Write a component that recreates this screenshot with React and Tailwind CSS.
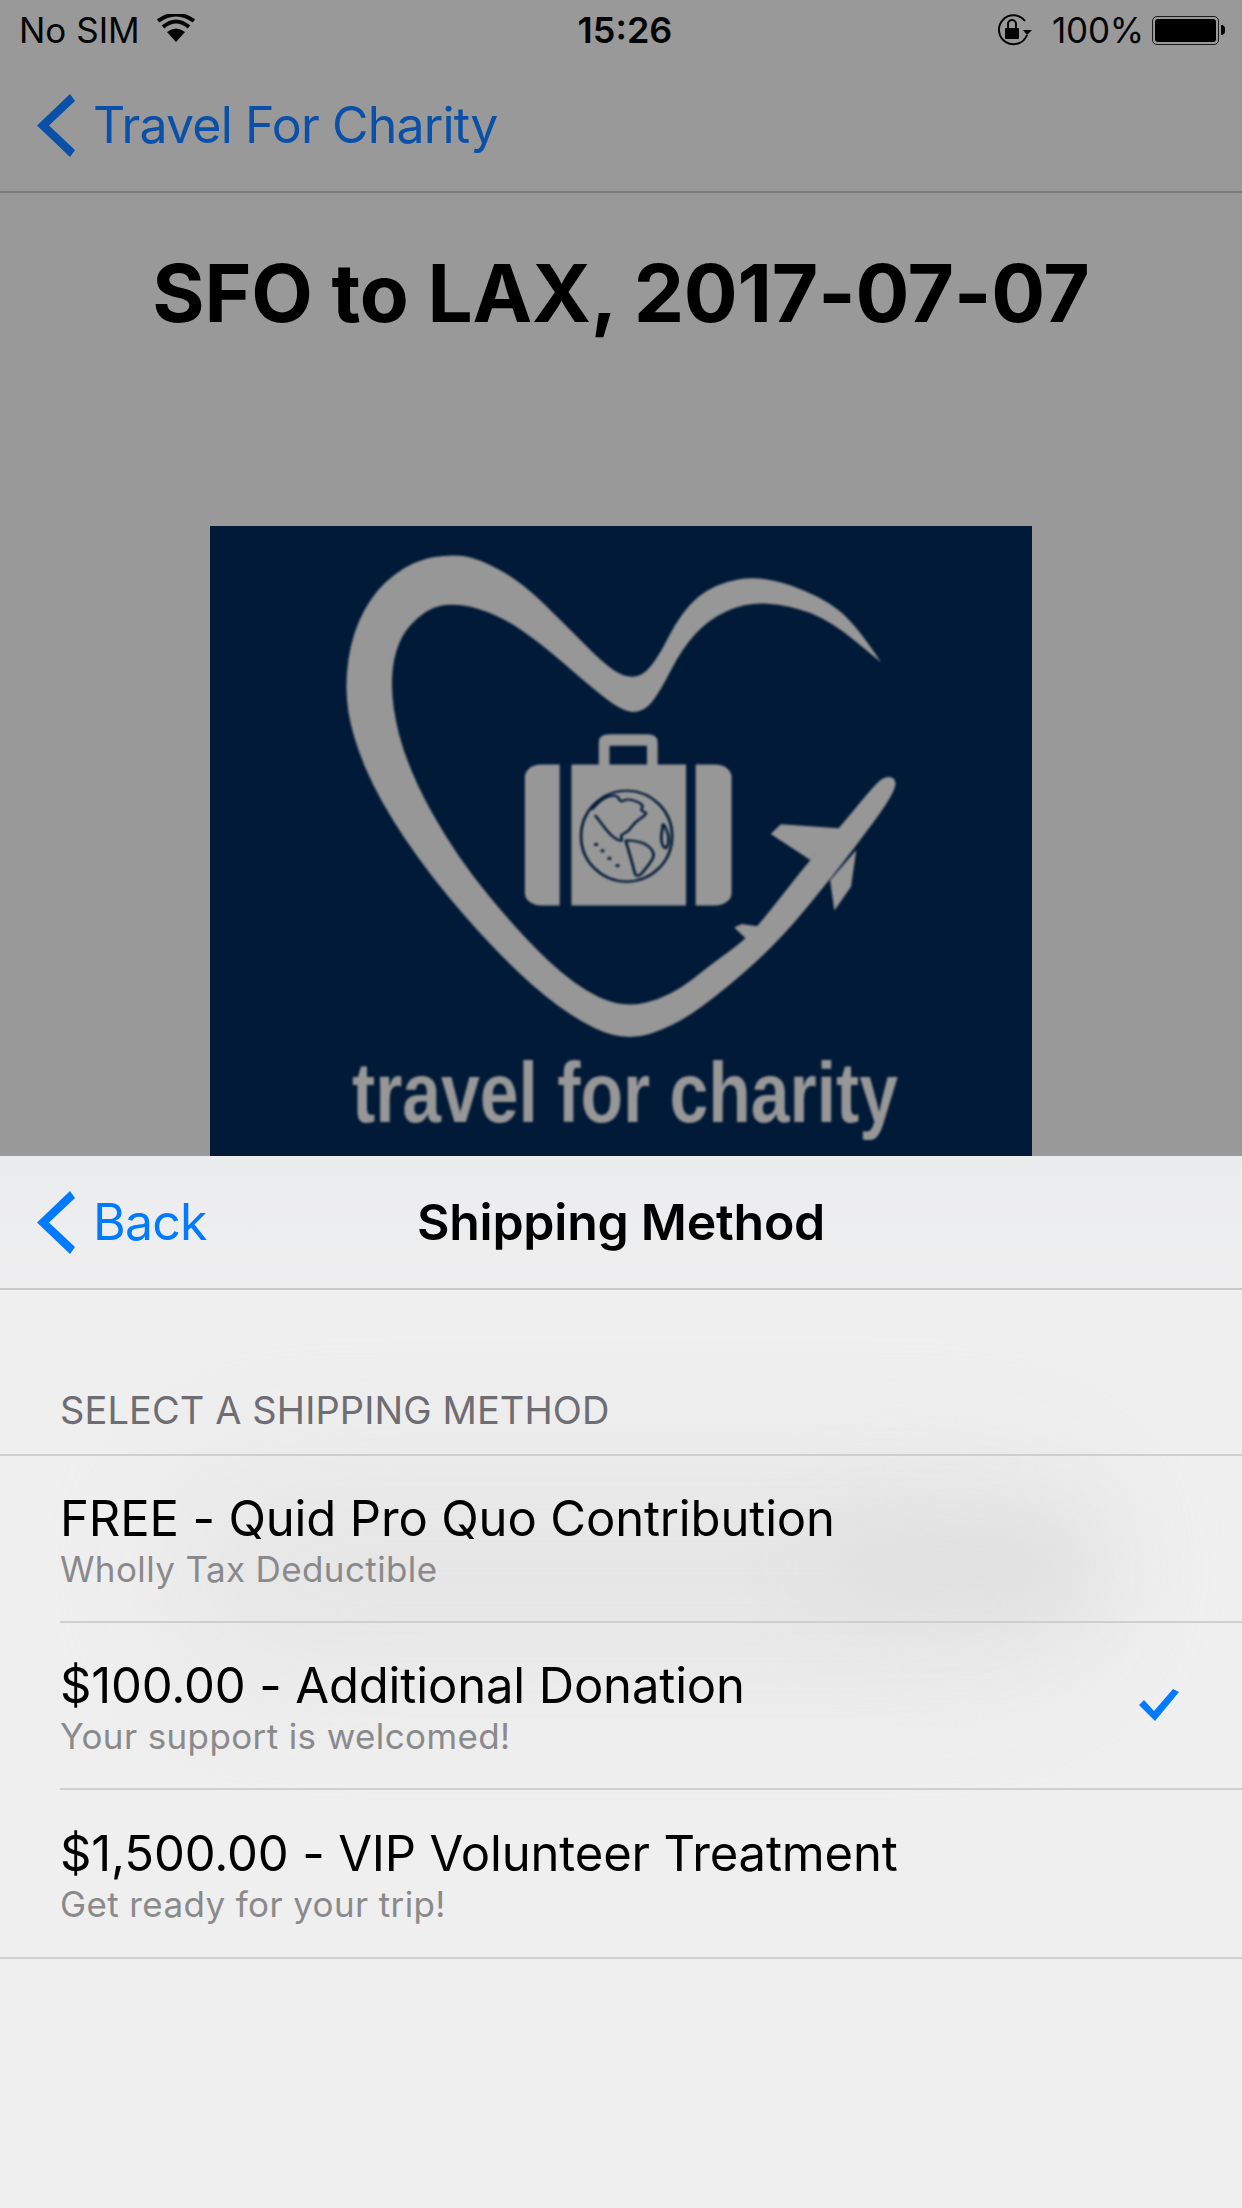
const sans = 'font-["Inter","Liberation_Sans",sans-serif]'

// turns a list of points into a smooth open outline using midpoint quadratics
function smooth(pts) {
  let d = `M${pts[0][0]} ${pts[0][1]}`
  for (let i = 1; i < pts.length - 1; i++) {
    const [x, y] = pts[i]
    const [nx, ny] = pts[i + 1]
    d += ` Q${x} ${y} ${(x + nx) / 2} ${(y + ny) / 2}`
  }
  const last = pts[pts.length - 1]
  return `${d} L${last[0]} ${last[1]}`
}

const heart = smooth([
  [1272, 362], [1225, 270], [1160, 205], [1050, 155], [960, 175], [900, 240], [850, 365], [815, 402],
  [770, 385], [680, 270], [600, 170], [520, 115], [470, 105], [400, 120], [330, 185], [285, 290],
  [270, 420], [285, 540], [335, 690], [430, 870], [560, 1060], [680, 1195], [790, 1265], [890, 1225],
  [985, 1135], [1085, 1020], [1175, 880], [1230, 790], [1285, 695], [1304, 645], [1285, 630], [1262, 650],
  [1195, 755], [1140, 830], [1060, 960], [1020, 1020], [960, 1075], [880, 1155], [790, 1185], [700, 1130],
  [600, 1010], [480, 825], [390, 620], [355, 450], [365, 315], [420, 235], [480, 220], [560, 250],
  [640, 320], [720, 410], [790, 480], [830, 480], [860, 430], [900, 330], [950, 260], [1020, 220],
  [1100, 225], [1180, 265], [1272, 362],
])

const northAmerica = smooth([
  [732, 712], [750, 685], [780, 676], [785, 695], [800, 685], [830, 700], [822, 715], [838, 720],
  [812, 742], [800, 765], [785, 772], [790, 790], [768, 775], [750, 745], [738, 725],
])
const southAmerica = smooth([
  [795, 785], [825, 785], [852, 815], [838, 845], [815, 878], [808, 840], [795, 785],
])
const africa = smooth([[865, 745], [878, 770], [872, 810], [860, 790], [865, 745]])

function Logo() {
  return (
    <div className="w-[822px] h-[630px] mx-auto bg-[#011a38] overflow-hidden">
      <svg width="822" height="630" viewBox="0 0 822 630" className="blur-[0.8px]">
        <g transform="scale(0.5355 0.4208) translate(-19 -38)">
          <path d={heart} fill="#979797" />
          {/* plane wings and tail */}
          <path d="M1066 770 L1085 747 L1200 757 L1140 832 Z" fill="#979797" />
          <path d="M1226 808 L1216 895 L1185 952 L1177 880 Z" fill="#979797" />
          <path d="M998 992 L1012 984 L1045 990 L1025 1025 Z" fill="#979797" />
          {/* suitcase */}
          <path fillRule="evenodd" d="M745 610 V552 Q745 533 765 533 H835 Q855 533 855 552 V610 H835 V560 H765 V610 Z" fill="#979797" />
          <rect x="607" y="605" width="386" height="335" rx="30" fill="#979797" />
          <rect x="672" y="600" width="22" height="345" fill="#011a38" />
          <rect x="908" y="600" width="18" height="345" fill="#011a38" />
          {/* globe */}
          <g fill="none" stroke="#011a38" strokeWidth="5">
            <ellipse cx="797" cy="775" rx="85" ry="108" />
            <path d={northAmerica} />
            <path d={southAmerica} />
            <path d={africa} />
          </g>
          <g fill="#011a38">
            <circle cx="740" cy="795" r="4" /><circle cx="752" cy="810" r="4" />
            <circle cx="765" cy="828" r="4" /><circle cx="780" cy="845" r="4" />
          </g>
        </g>
        <text x="142" y="596" fontSize="86" fontWeight="700" fill="#979797" textLength="546" lengthAdjust="spacingAndGlyphs" fontFamily="Liberation Sans, sans-serif">travel for charity</text>
      </svg>
    </div>
  )
}

function BackChevron({ color }) {
  return (
    <svg width="38" height="63" viewBox="0 0 38 63" className={color}>
      <path d="M33 0 L38 7 L12 31.5 L38 56 L33 63 L0 31.5 Z" fill="currentColor" />
    </svg>
  )
}

function StatusBar() {
  return (
    <div className="h-[60px] grid grid-cols-3 items-center text-[35px] text-[#050505]">
      <div className="flex items-center pl-[19px]">
        <span>No SIM</span>
        <svg width="38" height="28" viewBox="0 0 38 28" className="ml-[17px] mb-[5px]">
          <path d="M19 28 L10 18 Q19 11 28 18 Z" fill="#050505" />
          <path d="M6 13 Q19 2 32 13" fill="none" stroke="#050505" strokeWidth="4" />
          <path d="M1 7 Q19 -6 37 7" fill="none" stroke="#050505" strokeWidth="4" />
        </svg>
      </div>
      <div className="text-center pl-[8px] text-[36px] font-semibold">15:26</div>
      <div className="flex items-center justify-end pr-[17px]">
        <svg width="36" height="32" viewBox="0 0 36 32" className="mr-[20px]">
          <path d="M31 21 A14.5 14.5 0 1 1 29 7" fill="none" stroke="#050505" strokeWidth="2" />
          <path d="M27 16 H36 L31 21 Z" fill="#050505" />
          <rect x="9" y="14" width="14" height="11" rx="1" fill="#050505" />
          <path d="M12 14 V10 A4 4 0 0 1 20 10 V14" fill="none" stroke="#050505" strokeWidth="2" />
        </svg>
        <span className="tracking-[-0.2px]">100%</span>
        <div className="ml-[8px] w-[67px] h-[29px] rounded-[5px] border border-[#1a1a1a] p-[2px]">
          <div className="w-full h-full bg-black rounded-[3px]" />
        </div>
        <div className="ml-[2px] w-[4px] h-[10px] bg-black rounded-r-full" />
      </div>
    </div>
  )
}

const methods = [
  { title: 'FREE - Quid Pro Quo Contribution', note: 'Wholly Tax Deductible' },
  { title: '$100.00 - Additional Donation', note: 'Your support is welcomed!', selected: true },
  { title: '$1,500.00 - VIP Volunteer Treatment', note: 'Get ready for your trip!' },
]

export default function App() {
  return (
    <div className={`w-[1242px] h-[2208px] flex flex-col overflow-hidden bg-[#999999] ${sans}`}>
      {/* dimmed page behind the sheet */}
      <div className="h-[1156px] shrink-0 overflow-hidden">
        <StatusBar />
        <div className="h-[133px] flex items-center border-b-2 border-[#7b7b7b] pl-[37px]">
          <BackChevron color="text-[#0a50a8]" />
          <span className="ml-[18px] text-[50px] text-[#0a50a8] tracking-[-0.85px]">Travel For Charity</span>
        </div>
        <div className="h-[333px] pt-[60px]">
          <h1 className="text-center text-[80px] leading-[80px] font-bold text-black tracking-[-0.2px]">SFO to LAX, 2017-07-07</h1>
        </div>
        <Logo />
      </div>

      {/* shipping sheet */}
      <div className="relative flex-1 overflow-hidden bg-[#efeff0]">
        <div className="absolute left-[180px] top-[320px] w-[900px] h-[190px] rounded-full bg-[#e5e5e5] blur-3xl" />
        <div className="absolute left-[820px] top-[360px] w-[280px] h-[100px] rounded-full bg-[#e0e0e0] blur-2xl" />

        <div className="relative">
          <div className="relative h-[134px] flex items-center justify-center border-b-2 border-[#c8c8c9] bg-gradient-to-b from-[#ebecee] to-[#eeeeef]">
            <div className="absolute left-[37px] top-[29px] flex items-center">
              <BackChevron color="text-[#007aff]" />
              <span className="ml-[18px] text-[50px] text-[#007aff] tracking-[-0.8px]">Back</span>
            </div>
            <span className="text-[50px] font-semibold text-black tracking-[-0.25px]">Shipping Method</span>
          </div>

          <div className="h-[164px] flex items-end pl-[60px] pb-[22px] text-[38px] leading-[44px] text-[#6d6d72] tracking-[0.1px]">
            SELECT A SHIPPING METHOD
          </div>

          <ul className="border-t-2 border-[#cfcfd0]">
            {methods.map((m, i) => (
              <li key={m.title} className={i === methods.length - 1 ? 'pl-[60px] border-b-2 border-[#cfcfd0]' : 'pl-[60px]'}>
                <div className={`h-[167px] flex items-center pr-[63px] ${i === methods.length - 1 ? '' : 'border-b-2 border-[#cfcfd0]'}`}>
                  <div className="flex-1">
                    <div className="text-[49px] leading-[60px] text-black tracking-[-0.15px] translate-y-[1px]">{m.title}</div>
                    <div className="text-[35px] leading-[42px] text-[#8a8a8c] tracking-[0.38px]">{m.note}</div>
                  </div>
                  {m.selected && (
                    <svg width="40" height="32" viewBox="0 0 40 32" className="mb-[1px]">
                      <path d="M0 16 L5 11 L15 22 L34 0 L40 3 L16 32 Z" fill="#007aff" />
                    </svg>
                  )}
                </div>
              </li>
            ))}
          </ul>
        </div>
      </div>
    </div>
  )
}
